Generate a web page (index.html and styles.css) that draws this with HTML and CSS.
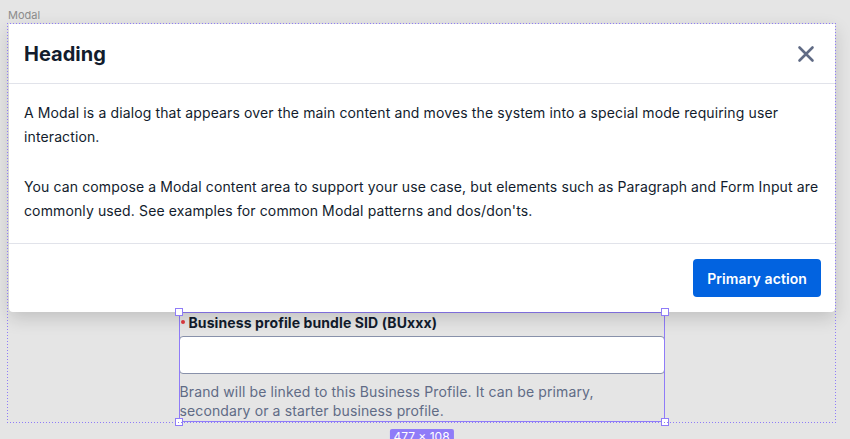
FILE: index.html
```html
<!DOCTYPE html>
<html lang="en">
<head>
<meta charset="utf-8">
<title>Modal</title>
<link rel="stylesheet" href="styles.css">
</head>
<body>
<div class="canvas">
  <div class="frame-label">Modal</div>
  <div class="frame">
    <section class="modal">
      <header class="modal-header">
        <h2 class="modal-title">Heading</h2>
        <button class="close" aria-label="Close">
          <svg width="20" height="20" viewBox="0 0 20 20"><path d="M3.5 3.5 L16.5 16.5 M16.5 3.5 L3.5 16.5" stroke="#606b85" stroke-width="2.6" stroke-linecap="round" fill="none"/></svg>
        </button>
      </header>
      <div class="modal-body">
        <p>A Modal is a dialog that appears over the main content and moves the system into a special mode requiring user interaction.</p>
        <p>You can compose a Modal content area to support your use case, but elements such as Paragraph and Form Input are commonly used. See examples for common Modal patterns and dos/don'ts.</p>
      </div>
      <footer class="modal-footer">
        <button class="btn-primary">Primary action</button>
      </footer>
    </section>
    <div class="field">
      <label class="field-label"><span class="req"></span>Business profile bundle SID (BUxxx)</label>
      <div class="input"></div>
      <div class="help">Brand will be linked to this Business Profile. It can be primary, secondary or a starter business profile.</div>
      <span class="handle tl"></span><span class="handle tr"></span><span class="handle bl"></span><span class="handle br"></span>
      <span class="size-badge">477 × 108</span>
    </div>
  </div>
</div>
</body>
</html>
```
FILE: styles.css
```css
* { box-sizing: border-box; }
html, body { margin: 0; padding: 0; }
body {
  background: #e5e5e5;
  font-family: Inter, "Noto Sans", sans-serif;
  color: #121c2d;
  width: 850px;
  height: 439px;
  overflow: hidden;
}
.canvas {
  padding: 8px 0 0 7px;
  width: 836px;
}
.frame-label {
  font-size: 11px;
  line-height: 14px;
  height: 15px;
  padding-left: 1px;
  color: #8c8c8c;
}
.frame {
  position: relative;
  border: 1px solid transparent;
  width: 829px;
}
.frame::before {
  content: "";
  position: absolute;
  top: -1px;
  left: -1px;
  right: -1px;
  bottom: -1px;
  pointer-events: none;
  z-index: 3;
  background:
    repeating-linear-gradient(90deg, #8f7cf8 0 1px, transparent 1px 3px) top left / 100% 1px no-repeat,
    repeating-linear-gradient(90deg, #8f7cf8 0 1px, transparent 1px 3px) bottom left / 100% 1px no-repeat,
    repeating-linear-gradient(180deg, #8f7cf8 0 1px, transparent 1px 3px) top left / 1px 100% no-repeat,
    repeating-linear-gradient(180deg, #8f7cf8 0 1px, transparent 1px 3px) top right / 1px 100% no-repeat;
}
.modal {
  position: relative;
  z-index: 1;
  background: #fff;
  margin: 0 0 0 1px;
  border-radius: 0 0 4px 4px;
  box-shadow: 0 6px 18px rgba(0, 0, 0, 0.16);
}
.modal-header {
  display: flex;
  align-items: center;
  justify-content: space-between;
  height: 60px;
  padding: 0 19px 0 15px;
  border-bottom: 1px solid #e1e3ea;
}
.modal-title {
  margin: 0;
  font-size: 20px;
  font-weight: 700;
  line-height: 28px;
  color: #121c2d;
}
.close {
  border: 0;
  background: none;
  padding: 0;
  width: 20px;
  height: 20px;
  display: flex;
}
.modal-body {
  padding: 17px 15px 20px 15px;
  border-bottom: 1px solid #e1e3ea;
}
.modal-body p {
  margin: 0;
  font-size: 14px;
  line-height: 24px;
  letter-spacing: 0.12px;
  color: #121c2d;
}
.modal-body p + p { margin-top: 26px; }
.modal-footer {
  display: flex;
  justify-content: flex-end;
  padding: 15px 14px 15px;
}
.btn-primary {
  font-family: Inter, "Noto Sans", sans-serif;
  font-size: 14px;
  font-weight: 600;
  letter-spacing: 0.1px;
  color: #fff;
  background: #0263e0;
  border: 0;
  border-radius: 4px;
  height: 38px;
  padding: 0 14px;
}
.field {
  position: relative;
  width: 486px;
  margin: 0 auto;
  outline: 1.5px solid #8f7cf8;
  outline-offset: -1px;
  height: 110px;
}
.field-label {
  display: flex;
  align-items: center;
  font-size: 14px;
  font-weight: 700;
  line-height: 20px;
  letter-spacing: 0.1px;
  padding-left: 2px;
  padding-top: 1px;
  margin-bottom: 3px;
  color: #121c2d;
}
.req {
  width: 4px;
  height: 4px;
  border-radius: 50%;
  background: #e0393e;
  margin-right: 4px;
  margin-top: -2px;
}
.input {
  height: 38px;
  background: #fff;
  border: 1px solid #8891aa;
  border-radius: 4px;
}
.help {
  margin-top: 8px;
  padding-left: 1px;
  font-size: 14px;
  line-height: 19px;
  letter-spacing: 0.12px;
  color: #606b85;
}
.handle {
  position: absolute;
  width: 8px;
  height: 8px;
  background: #fff;
  border: 1.5px solid #8f7cf8;
  z-index: 2;
}
.tl { left: -4px; top: -4px; }
.tr { right: -4px; top: -4px; }
.bl { left: -4px; bottom: -4px; }
.br { right: -4px; bottom: -4px; }
.size-badge {
  position: absolute;
  left: 50%;
  transform: translateX(-50%);
  top: 117px;
  background: #8f7cf8;
  color: #fff;
  font-size: 12px;
  line-height: 15px;
  padding: 0 4px;
  border-radius: 2px;
  white-space: nowrap;
}
```
